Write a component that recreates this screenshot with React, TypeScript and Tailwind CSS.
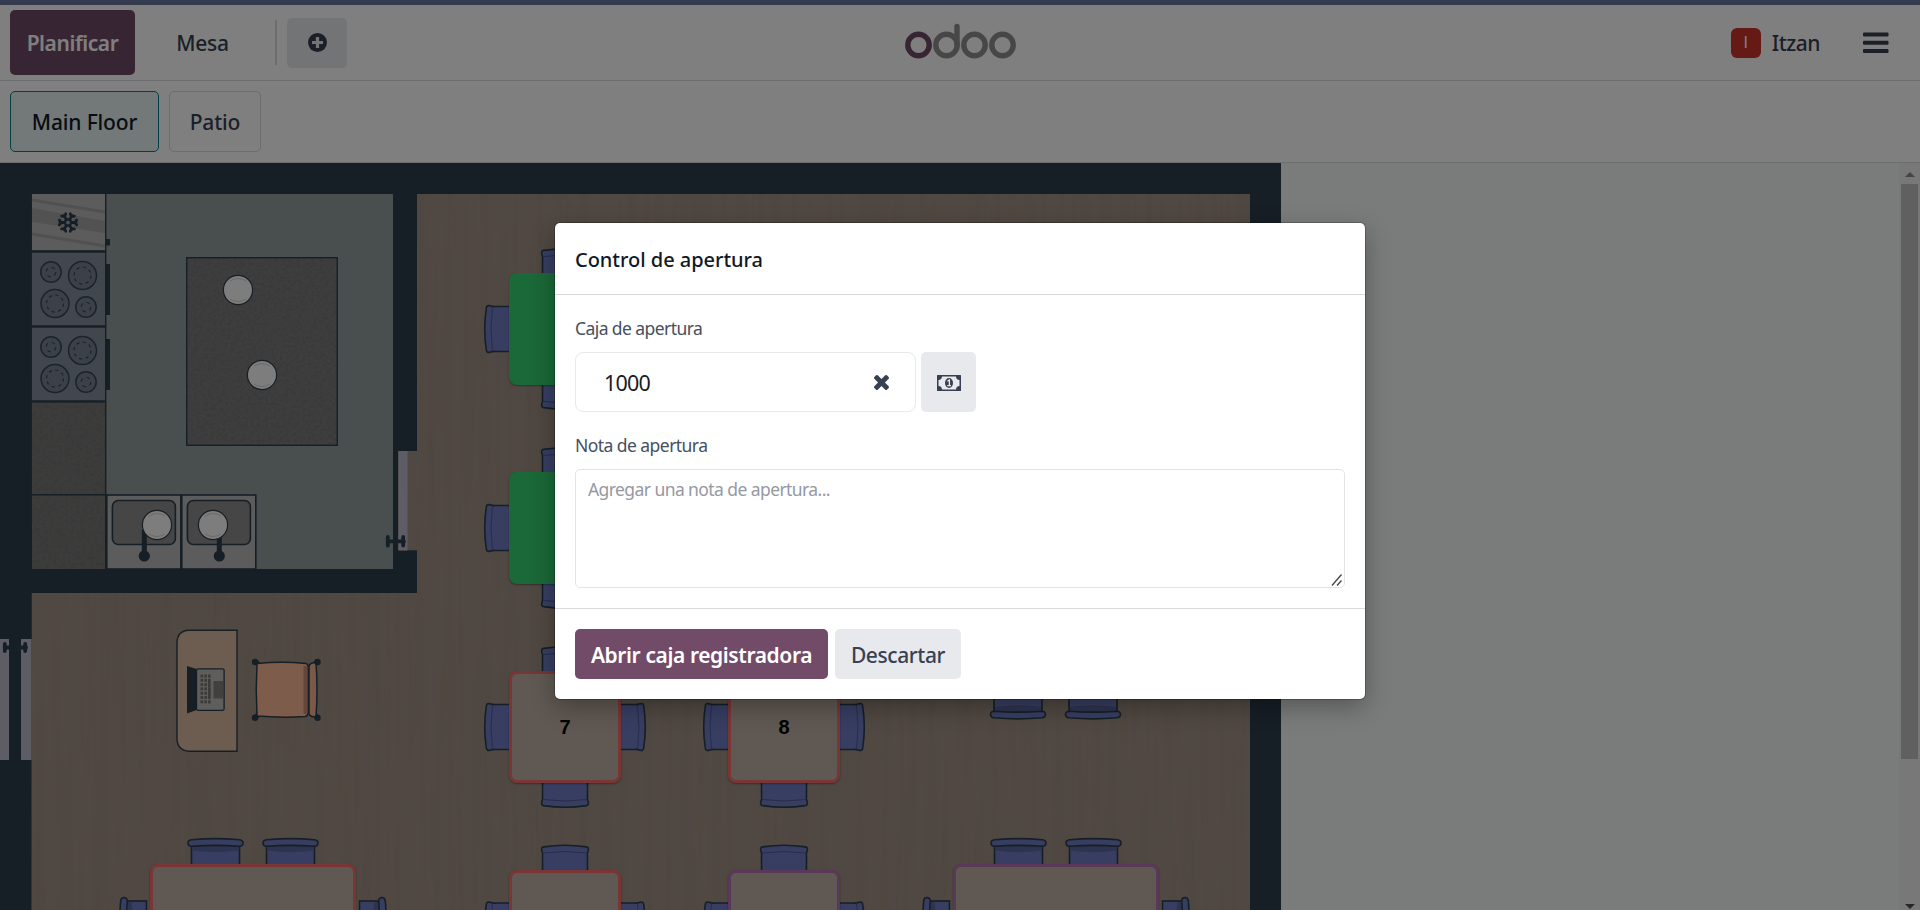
import React from 'react';

const INK = '#2c3c4c';
const SEAT = '#6e7cc4';

/* Small-table chair: drawn facing down, origin at the middle of the table edge */
function Stool({ x, y, r }: { x: number; y: number; r: number }) {
  return (
    <g transform={`translate(${x} ${y}) rotate(${r})`} stroke={INK} strokeWidth="1.6">
      <path d="M-22.5 -2 L-22.5 13 Q-22 16 -23.2 19 Q-24 22 -21.5 22.6 Q0 26 21.5 22.6 Q24 22 23.2 19 Q22 16 22.5 13 L22.5 -2Z" fill={SEAT} />
      <path d="M-22 16.5 Q0 19.5 22 16.5" fill="none" stroke="#4e5b94" strokeWidth="1" />
    </g>
  );
}

/* Large-table chair with a wide back rest */
function Armchair({ x, y, r }: { x: number; y: number; r: number }) {
  return (
    <g transform={`translate(${x} ${y}) rotate(${r})`} stroke={INK} strokeWidth="1.6">
      <rect x="-24" y="-2" width="48" height="22" fill={SEAT} />
      <path d="M-23 13 Q0 9.5 23 13 L23 18 L-23 18Z" fill="#5c689f" stroke="none" />
      <path d="M-24 17.2 Q0 19 24 17.2 Q27.5 17.4 27.5 20.5 Q27.5 23.4 24 23.8 Q0 26 -24 23.8 Q-27.5 23.4 -27.5 20.5 Q-27.5 17.4 -24 17.2Z" fill={SEAT} />
    </g>
  );
}

function Plate({ x, y }: { x: number; y: number }) {
  return (
    <g>
      <circle cx={x} cy={y} r="14.6" fill="#fbfbfb" stroke={INK} strokeWidth="1.2" />
      <path d={`M${x - 8} ${y - 9} Q${x} ${y - 14} ${x + 8} ${y - 9} M${x - 8} ${y + 9} Q${x} ${y + 14} ${x + 8} ${y + 9}`} fill="none" stroke="#c9c9c9" strokeWidth="0.8" />
    </g>
  );
}

function Burner({ x, y, big }: { x: number; y: number; big?: boolean }) {
  return (
    <g fill="none" stroke="#35465a" strokeWidth="1.5">
      <circle cx={x} cy={y} r={big ? 14 : 10.2} fill="#79838f" />
      <circle cx={x} cy={y} r={big ? 8.5 : 4.8} strokeWidth="1.2" strokeDasharray={big ? '3.3 3.37' : '3.6 3.94'} />
    </g>
  );
}

function Stove({ y }: { y: number }) {
  return (
    <g>
      <rect x="32" y={y} width="73" height="72" fill="#848e9b" />
      <Burner x={51} y={y + 19} />
      <Burner x={82.5} y={y + 22.5} big />
      <Burner x={55} y={y + 50.5} big />
      <Burner x={86} y={y + 54} />
      <rect x="105.5" y={y + 11} width="4.5" height="51" fill={INK} />
    </g>
  );
}

function Sink({ x, plate }: { x: number; plate: number }) {
  return (
    <g>
      <rect x={x} y="495" width="74" height="74" fill="#b9b9b9" stroke={INK} strokeWidth="1.6" />
      <rect x={x + 5.6} y="500.5" width="63" height="44" rx="6" fill="#8c8c8c" stroke={INK} strokeWidth="1.6" />
      <path d={`M${x + 37.5} 530V556`} stroke={INK} strokeWidth="5" />
      <circle cx={x + 37.5} cy="556" r="5.6" fill={INK} />
      <Plate x={plate} y={525} />
    </g>
  );
}

function FloorPlan() {
  const keys = [0, 1, 2, 3, 4, 5, 6];
  return (
    <svg className="block h-full w-full" viewBox="0 163 1281 747" preserveAspectRatio="xMinYMin slice">
      <defs>
        <filter id="grain" x="0" y="0" width="100%" height="100%">
          <feTurbulence type="fractalNoise" baseFrequency="0.11 0.004" numOctaves="3" seed="4" />
          <feColorMatrix values="0 0 0 0 0.27  0 0 0 0 0.22  0 0 0 0 0.2  0.45 0 0 0 -0.16" />
        </filter>
        <filter id="speckle" x="0" y="0" width="100%" height="100%">
          <feTurbulence type="fractalNoise" baseFrequency="0.35" numOctaves="2" seed="2" />
          <feColorMatrix values="0 0 0 0 0.1  0 0 0 0 0.1  0 0 0 0 0.1  0.7 0 0 0 -0.27" />
        </filter>
      </defs>

      {/* wall mass and the wooden dining floor */}
      <rect x="0" y="163" width="1281" height="747" fill={INK} />
      <path d="M417 194H1250V910H31.5V593H417Z" fill="#a19184" />
      <rect x="398" y="451" width="20" height="99.5" fill="#a19184" />
      <rect x="31.5" y="194" width="1218.5" height="716" filter="url(#grain)" />
      <path d="M0 163H1281V194H417V451H393V163ZM0 163H31.5V639H0Z" fill={INK} />
      <path d="M393 190H417V451H398V550.5H417V593H0V569H393Z" fill={INK} />

      {/* kitchen floor */}
      <rect x="32" y="194" width="361" height="375" fill="#929c9f" />
      <path d="M394 190V593" stroke={INK} strokeWidth="2" />

      {/* fridge */}
      <rect x="32" y="194" width="73" height="56" fill="#b9b9b9" />
      <path d="M32 208L105 221V233L32 222Z" fill="#a4a4a4" />
      <path d="M32 200L105 212M32 234L105 246" stroke="#a2a2a2" strokeWidth="3" />
      <g transform="translate(68 222.5)" stroke={INK} strokeWidth="2.8" strokeLinecap="round" fill="none">
        {[0, 60, 120, 180, 240, 300].map((a) => (
          <path key={a} transform={`rotate(${a})`} d="M3 0H8M8.7 -2.4L7 0L8.7 2.4" />
        ))}
        <circle r="3.2" strokeWidth="2" />
      </g>
      <path d="M32 251.5H106M32 326.5H106M32 401.5H106" stroke={INK} strokeWidth="2.6" />
      <rect x="105.5" y="239" width="4.5" height="6.5" fill={INK} />
      <Stove y={253} />
      <Stove y={328} />

      {/* granite counters */}
      <rect x="32" y="403" width="73" height="166" fill="#7a7978" />
      <rect x="32" y="403" width="73" height="166" filter="url(#speckle)" />
      <path d="M32 494.7H106" stroke={INK} strokeWidth="1.4" />
      <path d="M105.7 194V569" stroke={INK} strokeWidth="1.4" />
      <rect x="186.7" y="257.7" width="150.6" height="187.6" fill="#7c7c7c" stroke={INK} strokeWidth="1.4" />
      <rect x="187" y="258" width="150" height="187" filter="url(#speckle)" />
      <Plate x={238} y={290} />
      <Plate x={262} y={375} />
      <Sink x={106.8} plate={157} />
      <Sink x={181.8} plate={213} />

      {/* doors */}
      <g fill="#bcb8c8">
        <rect x="398.5" y="451" width="9" height="99.5" />
        <rect x="0" y="639" width="9" height="121" />
        <rect x="21" y="639" width="10.5" height="121" />
      </g>
      <path d="M9 639H21V760H9Z" fill={INK} />
      <path d="M387.6 541.3H404M387.8 537V545.6M403.2 537V545.6M4.8 644V651M25.2 644V651M5 647.5H26" stroke={INK} strokeWidth="3.8" strokeLinecap="round" fill="none" />

      {/* cashier desk */}
      <path d="M237 630.3V751.3H189Q177 750 177 738.5V643Q177 631 189 630.3Z" fill="#d8baa0" stroke={INK} strokeWidth="1.4" />
      <path d="M187 666L196.5 669V710L187 713.5Z" fill={INK} />
      <rect x="196.5" y="668.8" width="27.6" height="41.5" rx="1.5" fill="#bcbcb6" stroke={INK} strokeWidth="1.3" />
      <rect x="213.5" y="681" width="9.5" height="17.5" fill="#84807a" />
      <g fill="#7a7672">
        {keys.map((k) => (
          <React.Fragment key={k}>
            <rect x="200.5" y={674.5 + k * 4.3} width="2.7" height="3" />
            <rect x="204.3" y={674.5 + k * 4.3} width="2.7" height="3" />
            <rect x="208" y={674.5 + k * 4.3} width="2.7" height={k > 0 && k < 5 ? 4.4 : 3.2} />
          </React.Fragment>
        ))}
      </g>
      <g stroke={INK} strokeWidth="1.5">
        <path d="M256 662L258 664M256 717L258 715M317 662L315 664M317 717L315 715" strokeWidth="5" />
        <path d="M257 663.5Q282 661 306 663.5Q308 664 308 667V713Q308 716 305 716.5Q282 718 257 716Q255.500 690 257 663.500Z" fill="#fcb898" />
        <rect x="303.5" y="666" width="4" height="48" fill="#c98d74" stroke="none" />
        <path d="M309 666Q310 662.500 316 662.500Q318 690 316 717Q310 717 309 714Z" fill="#f6b292" />
        <g fill={INK} stroke="none">
          <circle cx="255" cy="662" r="3.2" />
          <circle cx="255" cy="717.8" r="3.2" />
          <circle cx="317.500" cy="662" r="3.2" />
          <circle cx="317.500" cy="717.8" r="3.2" />
        </g>
      </g>

      {/* chairs of the square tables */}
      {[565, 784].map((cx) =>
        [329, 528, 727, 925.5].map((cy) => (
          <g key={`${cx}-${cy}`}>
            <Stool x={cx} y={cy + 56} r={0} />
            <Stool x={cx - 56} y={cy} r={90} />
            <Stool x={cx} y={cy - 56} r={180} />
            <Stool x={cx + 56} y={cy} r={270} />
          </g>
        ))
      )}

      {/* chairs of the long tables */}
      <Armchair x={1018} y={694} r={0} />
      <Armchair x={1093} y={694} r={0} />
      {[150, 953].map((x) => (
        <g key={x}>
          <Armchair x={x + 65.5} y={863.5} r={180} />
          <Armchair x={x + 140.5} y={863.5} r={180} />
          <Armchair x={x - 5.5} y={925} r={90} />
          <Armchair x={x + 211.5} y={925} r={270} />
        </g>
      ))}
    </svg>
  );
}

const tables: { label?: string; className: string }[] = [
  { className: 'left-[509px] top-[110px] size-[112px] bg-[#36d070]' },
  { className: 'left-[509px] top-[309px] size-[112px] bg-[#36d070]' },
  { label: '7', className: 'left-[509px] top-[508px] size-[112px] border-3 border-[#f46a6a] bg-[#c0b1a4]' },
  { label: '8', className: 'left-[728px] top-[508px] size-[112px] border-3 border-[#f46a6a] bg-[#c0b1a4]' },
  { className: 'left-[509px] top-[706.500px] size-[112px] border-3 border-[#f46a6a] bg-[#c0b1a4]' },
  { className: 'left-[728px] top-[706.500px] size-[112px] border-3 border-[#b270b0] bg-[#c0b1a4]' },
  { className: 'left-[150px] top-[700.500px] h-[124px] w-[206px] border-3 border-[#f46a6a] bg-[#c0b1a4]' },
  { className: 'left-[953px] top-[700.500px] h-[124px] w-[206px] border-3 border-[#b270b0] bg-[#c0b1a4]' },
];

function OdooLogo() {
  return (
    <svg className="h-9 w-[111px]" viewBox="0 0 111 36" fill="none" strokeWidth="5.4">
      <circle cx="13.5" cy="22" r="10.7" stroke="#714b67" />
      <g stroke="#8f8f8f">
        <circle cx="41.5" cy="22" r="10.7" />
        <circle cx="69.5" cy="22" r="10.7" />
        <circle cx="97.5" cy="22" r="10.7" />
        <path d="M52 3.5V22" strokeLinecap="round" />
      </g>
    </svg>
  );
}

function Header() {
  return (
    <header className="flex h-[76px] shrink-0 items-center border-b border-[#d8dadd] bg-white text-[#374151]">
      <div className="flex flex-1 items-center">
        <button className="ml-2.5 h-[65px] w-[125px] rounded-[5px] bg-[#714b67] pt-[3px] text-[21px] font-semibold tracking-[-0.45px] text-white">Planificar</button>
        <button className="ml-2.5 h-[65px] w-[115px] pt-[3px] text-[21px] font-medium tracking-[-0.3px]">Mesa</button>
        <div className="ml-[15px] h-[45px] w-0.5 bg-[#d8dadd]" />
        <button className="ml-2.5 flex h-[50px] w-[60px] items-center justify-center rounded-[5px] bg-[#e7e9ed]">
          <svg className="size-[19px]" viewBox="0 0 19 19">
            <circle cx="9.5" cy="9.5" r="9.5" fill="#374151" />
            <path d="M9.5 4V15M4 9.5H15" stroke="#e7e9ed" strokeWidth="3.2" />
          </svg>
        </button>
      </div>
      <div className="-mt-1">
        <OdooLogo />
      </div>
      <div className="flex flex-1 items-center justify-end">
        <span className="flex size-[30px] items-center justify-center rounded-md bg-[#cc352d] font-['Liberation_Sans',sans-serif] text-[16px] text-white">I</span>
        <span className="ml-[11px] pt-[3px] text-[21px] font-medium tracking-[-0.5px]">Itzan</span>
        <svg className="mr-[31px] ml-[43px] h-[22px] w-[26px]" viewBox="0 0 26 22" fill="#374151">
          <rect y="0.500" width="25.5" height="4" rx="1" />
          <rect y="8.700" width="25.5" height="4" rx="1" />
          <rect y="17" width="25.5" height="4" rx="1" />
        </svg>
      </div>
    </header>
  );
}

function OpeningDialog() {
  return (
    <section className="mt-[223px] h-[476px] w-[810px] rounded-[5px] bg-white shadow-[0_8px_24px_rgba(0,0,0,0.3),0_0_0_1px_rgba(0,0,0,0.2)]">
      <h2 className="flex h-[72px] items-center border-b border-[#d8dadd] px-5 pt-0.5 text-[20px] font-medium text-[#111827]">
        <span className="tracking-[-0.03px]">Control de apertura</span>
      </h2>
      <div className="flex h-[314px] flex-col border-b border-[#d8dadd] px-5 pt-[19px] text-[17.5px] text-[#465060]">
        <label className="h-[38px] leading-[28px] tracking-[-0.58px]">Caja de apertura</label>
        <div className="flex gap-[5px]">
          <div className="flex h-[60px] w-[341px] items-center justify-between rounded-lg border border-[#e7e9ed] pr-[26px] pl-7">
            <span className="pt-[3px] text-[21.5px] tracking-[-0.8px] text-[#1c1c1c]">1000</span>
            <svg className="size-[15px]" viewBox="110 366 1188 1188" fill="#374151">
              <path d="M1298 1322q0 40-28 68l-136 136q-28 28-68 28t-68-28l-294-294-294 294q-28 28-68 28t-68-28l-136-136q-28-28-28-68t28-68l294-294-294-294q-28-28-28-68t28-68l136-136q28-28 68-28t68 28l294 294 294-294q28-28 68-28t68 28l136 136q28 28 28 68t-28 68l-294 294 294 294q28 28 28 68z" />
            </svg>
          </div>
          <button className="flex h-[60px] w-[55px] items-center justify-center rounded-[5px] bg-[#e7e9ed]">
            <svg className="mt-0.5 h-4 w-6" viewBox="0 0 24 16">
              <path fill="#374151" fillRule="evenodd" d="M.6 0H23.4Q24 0 24 .6V15.4Q24 16 23.4 16H.6Q0 16 0 15.4V.6Q0 0 .6 0ZM5 1.5Q4.8 4.8 1.5 5V11Q4.8 11.2 5 14.5H19Q19.2 11.2 22.5 11V5Q19.2 4.8 19 1.5Z" />
              <ellipse cx="12" cy="8" rx="4" ry="5" fill="#374151" />
              <path d="M10.4 6.3L12.4 5V10.5M10.2 10.7H14" stroke="#e7e9ed" strokeWidth="1.3" fill="none" />
            </svg>
          </button>
        </div>
        <label className="mt-[19px] h-[38px] leading-[28px] tracking-[-0.55px]">Nota de apertura</label>
        <div className="flex h-[119px] items-end justify-between rounded-[5px] border border-[#e2e4e8] pr-px pb-px pl-3">
          <span className="self-start pt-[5px] leading-[28px] tracking-[-0.58px] text-[#9599a2]">Agregar una nota de apertura...</span>
          <svg className="size-3" viewBox="0 0 12 12" stroke="#444" strokeWidth="1.3">
            <path d="M1 11.500L10.500 0.500M6 11.500L10.500 6.500" />
          </svg>
        </div>
      </div>
      <div className="flex gap-[7px] px-5 pt-5">
        <button className="h-[50px] w-[253px] rounded-[5px] bg-[#714b67] pt-[3px] text-[21px] font-semibold tracking-[-0.4px] whitespace-nowrap text-white">Abrir caja registradora</button>
        <button className="h-[50px] w-[126px] rounded-[5px] bg-[#e7e9ed] pt-[3px] text-[21px] font-medium tracking-[-0.4px] text-[#374151]">Descartar</button>
      </div>
    </section>
  );
}

export default function App() {
  return (
    <div className="relative h-[910px] w-full overflow-hidden font-['Noto_Sans','Open_Sans',sans-serif]">
      <div className="flex h-full flex-col">
        <div className="h-[5px] shrink-0 bg-[#68769e]" />
        <Header />
        <nav className="flex h-[82px] shrink-0 items-start gap-2.5 border-b border-[#d8dadd] bg-white pt-2.5 pl-2.5 text-[21px] font-medium tracking-[-0.15px]">
          <button className="h-[61px] w-[149px] rounded-[5px] border border-[#017e84] bg-[#e6f2f3] pt-[3px] text-[#111827]">Main Floor</button>
          <button className="h-[61px] w-[92px] rounded-[5px] border border-[#d8dadd] pt-[3px] text-[#374151]">Patio</button>
        </nav>
        <main className="flex min-h-0 flex-1 bg-[#f4f8f6]">
          <div className="relative h-full w-[1281px] shrink-0 overflow-hidden">
            <FloorPlan />
            {tables.map((t, i) => (
              <div
                key={i}
                className={`absolute flex items-center justify-center rounded-lg font-['Liberation_Sans',sans-serif] text-[20px] font-bold text-black shadow-[0_1px_2px_rgba(0,0,0,0.35)] ${t.className}`}
              >
                {t.label}
              </div>
            ))}
          </div>
          <div className="ml-auto flex w-[21px] flex-col items-center justify-between bg-[#f2f0f0] pt-[9px] pb-px">
            <svg className="h-[5px] w-2.5" viewBox="0 0 10 5"><path d="M0 5L5 0L10 5Z" fill="#8a8a8a" /></svg>
            <div className="mt-[7px] mb-auto h-[575px] w-[17px] bg-[#c1c1c1]" />
            <svg className="h-[5px] w-2.5" viewBox="0 0 10 5"><path d="M0 0L5 5L10 0Z" fill="#505050" /></svg>
          </div>
        </main>
      </div>
      <div className="absolute inset-0 flex items-start justify-center bg-black/50">
        <OpeningDialog />
      </div>
    </div>
  );
}
